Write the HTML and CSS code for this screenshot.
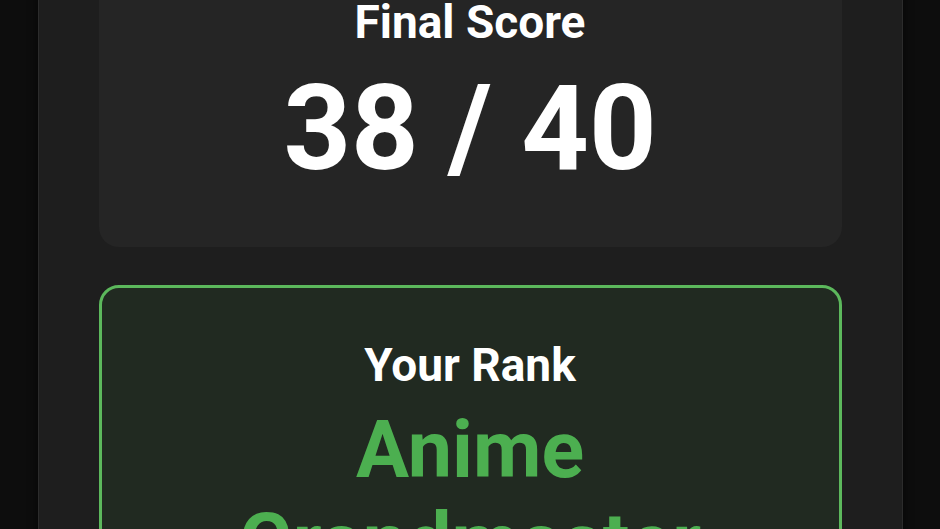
FILE: index.html
```html
<!DOCTYPE html>
<html lang="en">
<head>
    <meta charset="utf-8">
    <meta name="viewport" content="width=device-width, initial-scale=1">
    <title>Quiz Result</title>
    <link rel="stylesheet" href="styles.css">
</head>
<body>
    <main class="panel">
        <section class="score-card">
            <h2 class="card-title">Final Score</h2>
            <p class="score">38 / 40</p>
        </section>

        <section class="rank-card">
            <h2 class="card-title">Your Rank</h2>
            <p class="rank">Anime Grandmaster</p>
        </section>
    </main>
</body>
</html>
```

FILE: styles.css
```css
html, body {
    margin: 0;
    overflow: hidden;
}
body {
    background: #0d0d0d;
    color: white;
    font-family: Roboto, "Liberation Sans", sans-serif;
}

.panel {
    box-sizing: border-box;
    width: 865px;
    min-height: 100vh;
    margin: 0 auto;
    padding: 0 60px 40px;
    background: #1e1e1e;
    border-left: 1px solid #2c2c2c;
    border-right: 1px solid #2c2c2c;
    box-shadow: 0 0 8px rgba(0, 0, 0, 0.6);
}

.score-card {
    margin-top: -40px;
    padding: 35px 20px 47px;
    background: #252525;
    border-radius: 20px;
    text-align: center;
}

.card-title {
    margin: 0;
    font-size: 46px;
    font-weight: bold;
    line-height: 55px;
}

.score {
    margin: 8px 0 0;
    font-size: 118px;
    font-weight: bold;
    line-height: 142px;
}

/* rank box */
.rank-card {
    margin-top: 38px;
    padding: 50px 20px 40px;
    background: #212a21;
    border: 3px solid #5cb85c;
    border-radius: 20px;
    text-align: center;
}

.rank {
    margin: 11px 0 0;
    color: #4caf50;
    font-size: 79px;
    font-weight: bold;
    line-height: 92px;
}
```
